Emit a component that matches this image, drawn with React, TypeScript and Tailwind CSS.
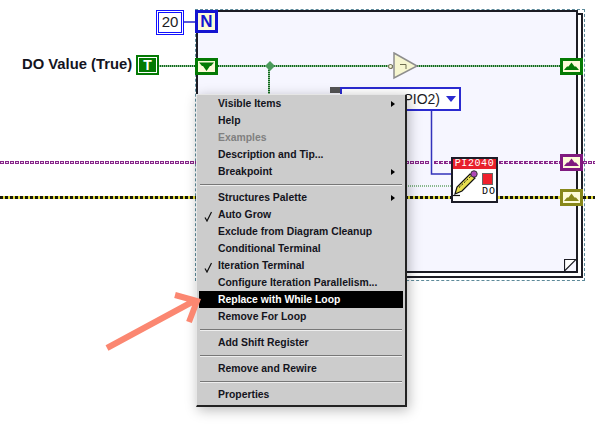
const menuGroups = [
  [
    { label: "Visible Items", submenu: true },
    { label: "Help" },
    { label: "Examples", disabled: true },
    { label: "Description and Tip..." },
    { label: "Breakpoint", submenu: true },
  ],
  [
    { label: "Structures Palette", submenu: true },
    { label: "Auto Grow", checked: true },
    { label: "Exclude from Diagram Cleanup" },
    { label: "Conditional Terminal" },
    { label: "Iteration Terminal", checked: true },
    { label: "Configure Iteration Parallelism..." },
    { label: "Replace with While Loop", active: true },
    { label: "Remove For Loop" },
  ],
  [{ label: "Add Shift Register" }],
  [{ label: "Remove and Rewire" }],
  [{ label: "Properties" }],
];

type Item = {
  label: string;
  submenu?: boolean;
  disabled?: boolean;
  checked?: boolean;
  active?: boolean;
};

const MenuRow = ({ item }: { item: Item }) => (
  <div
    className={`relative flex h-[17px] items-center pl-[19px] pt-[2px] text-[10.4px] font-bold leading-none ${
      item.active ? "bg-black text-white" : item.disabled ? "text-[#808080]" : "text-[#14141c]"
    }`}
  >
    {item.checked && (
      <svg className="absolute left-[5px] top-[5px]" width="9" height="11" viewBox="0 0 9 11">
        <path d="M1 6.5 L3 10 L7.5 1" fill="none" stroke="#111" strokeWidth="1.2" />
      </svg>
    )}
    {item.label}
    {item.submenu && (
      <span className="absolute left-[192px] top-[6px] h-0 w-0 border-y-[3.5px] border-l-[4px] border-y-transparent border-l-black" />
    )}
  </div>
);

// small square terminal with a hat shaped arrow pointing up or down
const Tunnel = ({
  className,
  color,
  down,
}: {
  className: string;
  color: string;
  down?: boolean;
}) => (
  <svg className={`absolute ${className}`} width="23" height="17" viewBox="0 0 23 17">
    <rect x="1.5" y="1.5" width="20" height="14" fill="#fdfbd8" stroke={color} strokeWidth="3" />
    {down ? (
      <path d="M4 4.5 H19 L16 8 H15 L11.5 13 L8 8 H7 Z" fill={color} />
    ) : (
      <path d="M4 12 L7 8.5 H8.5 L11.5 4.5 L14.5 8.5 H16 L19 12 Z" fill={color} />
    )}
  </svg>
);

const Wires = () => (
  <svg className="absolute left-0 top-0" width="595" height="435" viewBox="0 0 595 435">
    {/* boolean wires */}
    <path d="M158 66 H196 M218 66 H393 M417 66 H561 M269 66 V94" stroke="#6fa86f" strokeWidth="1.5" fill="none" />
    <path d="M158 66 H196 M218 66 H393 M417 66 H561 M269 66 V94" stroke="#0f6a1f" strokeWidth="2" strokeDasharray="1 1" fill="none" />
    <path d="M270 61 L275 66 L270 71 L265 66 Z" fill="#4a9a5a" />
    <path d="M406 186 H451" stroke="#1a7a1a" strokeWidth="1" strokeDasharray="1 1" fill="none" />
    {/* purple cluster wire */}
    <path d="M0 162.5 H429 M434 162.5 H561 M583 162.5 H595" stroke="#87268a" strokeWidth="3" strokeDasharray="4 1" fill="none" />
    <path d="M1 162.5 H429 M436 162.5 H561 M584 162.5 H595" stroke="#efd8ef" strokeWidth="1" strokeDasharray="2 3" fill="none" />
    {/* error wire */}
    <path d="M0 197.5 H561 M583 197.5 H595" stroke="#e2dc3a" strokeWidth="3" fill="none" />
    <path d="M0 197.5 H561 M583 197.5 H595" stroke="#16160c" strokeWidth="3" strokeDasharray="3 2" fill="none" />
    {/* blue wires */}
    <path d="M183 22 H196" stroke="#2222cc" strokeWidth="1.5" />
    <path d="M431.5 110 V174 H451" stroke="#3333bb" strokeWidth="1.5" fill="none" />
  </svg>
);

const NotGate = () => (
  <svg className="absolute left-[387px] top-[52px]" width="32" height="28" viewBox="0 0 32 28">
    <circle cx="3.5" cy="14.5" r="2" fill="#f6f6d8" stroke="#7a7a60" strokeWidth="1.2" />
    <path d="M7 1 L30 14 L7 26 Z" fill="#f6f6d0" stroke="#8d8d8d" strokeWidth="1.5" />
    <path d="M13 12.5 H19 V17" fill="none" stroke="#6e6e50" strokeWidth="1" />
  </svg>
);

const SubVi = () => (
  <div className="absolute left-[451px] top-[157px] h-[46px] w-[47px] border-2 border-[#1c1c28] bg-white">
    <div className="flex h-[10px] items-center justify-center bg-[#e8202c] font-['Liberation_Mono',monospace] text-[10px] leading-none tracking-[0.6px] text-white">
      PI2040
    </div>
    <svg className="absolute left-0 top-[10px]" width="43" height="32" viewBox="0 0 43 32">
      <path d="M2 25 L4 18 L17 5 L22 9 L9 22 Z" fill="#e8e050" stroke="#111" strokeWidth="1.2" />
      <path d="M6 18.5 L18 7" stroke="#111" strokeWidth="1" strokeDasharray="2 1.5" />
      <circle cx="21" cy="5" r="3.2" fill="#b048b8" stroke="#333" strokeWidth="1" />
      <path d="M0 26.5 H7" stroke="#111" strokeWidth="1.2" />
      <rect x="29.5" y="4.5" width="10" height="11" fill="#f0202c" stroke="#666" strokeWidth="1" />
    </svg>
    <span className="absolute left-[29px] top-[28px] font-['Liberation_Mono',monospace] text-[10px] leading-none tracking-[1px] text-black">
      DO
    </span>
  </div>
);

export default function App() {
  return (
    <div className="relative h-[435px] w-[595px] overflow-hidden bg-white font-['Liberation_Sans',Arial,sans-serif]">
      {/* for loop frame with stacked page edge */}
      <div className="absolute left-[195px] top-[9px] h-[272px] w-[390px] border border-dashed border-[#5c8a9a]" />
      <div className="absolute left-[197px] top-[13px] h-[265px] w-[386px] border-2 border-[#1c1c24] bg-white" />
      <div className="absolute left-[196px] top-[10px] h-[263px] w-[382px] border-2 border-[#1c1c24] bg-[#f6f6ff]">
        <svg className="absolute bottom-0 right-0" width="12" height="12" viewBox="0 0 12 12">
          <path d="M0.5 12 V0.5 H12 L0.5 12" fill="#fff" stroke="#1c1c24" strokeWidth="1.2" />
        </svg>
      </div>

      <Wires />

      <span className="absolute left-[22px] top-[55px] text-[14.8px] font-bold leading-[18px] text-[#14141e]">
        DO Value (True)
      </span>

      {/* iteration count constant */}
      <div className="absolute left-[156px] top-[10px] flex h-[25px] w-[28px] items-center justify-center border border-[#1010ff] p-px">
        <div className="flex h-full w-full items-center justify-center border border-[#1010ff] bg-white text-[15px] text-[#1c1c24]">
          20
        </div>
      </div>

      {/* N terminal */}
      <div className="absolute left-[195px] top-[10px] flex h-[23px] w-[23px] items-center justify-center border-[3px] border-[#1414d0] bg-[#fdfbd8] text-[17px] font-bold leading-none text-[#1414d0]">
        N
      </div>

      {/* T constant */}
      <div className="absolute left-[136px] top-[55px] flex h-[20px] w-[23px] items-center justify-center border-[2px] border-[#047a04] bg-white p-px">
        <div className="flex h-full w-full items-center justify-center bg-[#047a04] text-[14px] font-bold leading-none text-white">
          T
        </div>
      </div>

      <Tunnel className="left-[195px] top-[58px]" color="#047a04" down />
      <Tunnel className="left-[560px] top-[58px]" color="#047a04" />
      <Tunnel className="left-[560px] top-[154px]" color="#7f1a7f" />
      <Tunnel className="left-[560px] top-[189px]" color="#87871a" />

      <NotGate />

      {/* pin ring */}
      <div className="absolute left-[330px] top-[87px] h-[6px] w-[10px] bg-[#555]" />
      <div className="absolute left-[340px] top-[87px] flex h-[24px] w-[121px] items-center justify-end border-2 border-[#2a2ad0] bg-white pr-[19px] text-[14px] leading-none text-[#1c1c24]">
        PIO2)
        <span className="absolute right-[3px] top-[7px] h-0 w-0 border-x-[5px] border-t-[6px] border-x-transparent border-t-[#2a2ad0]" />
      </div>

      <SubVi />

      {/* context menu */}
      <div className="absolute left-[196px] top-[94px] h-[313px] w-[211px] border-b-2 border-l border-r-2 border-t border-b-[#222] border-l-[#e6e6e6] border-r-[#222] border-t-[#e6e6e6] bg-[#cccccc] px-[2px] shadow-[2px_3px_12px_rgba(0,0,0,0.28)]">
        {menuGroups.map((group, index) => (
          <div key={index}>
            {index > 0 && (
              <div className="flex h-[9px] items-center px-[1px]">
                <div className="h-px w-full border-t border-[#777] shadow-[0_1px_0_#eee]" />
              </div>
            )}
            {group.map((item) => (
              <MenuRow key={item.label} item={item} />
            ))}
          </div>
        ))}
      </div>

      {/* annotation arrow */}
      <svg className="absolute left-0 top-0" width="595" height="435" viewBox="0 0 595 435">
        <path d="M107 348 L194 301 M175 295 L197 301 L189 322" fill="none" stroke="#fb8771" strokeWidth="6" />
      </svg>
    </div>
  );
}
